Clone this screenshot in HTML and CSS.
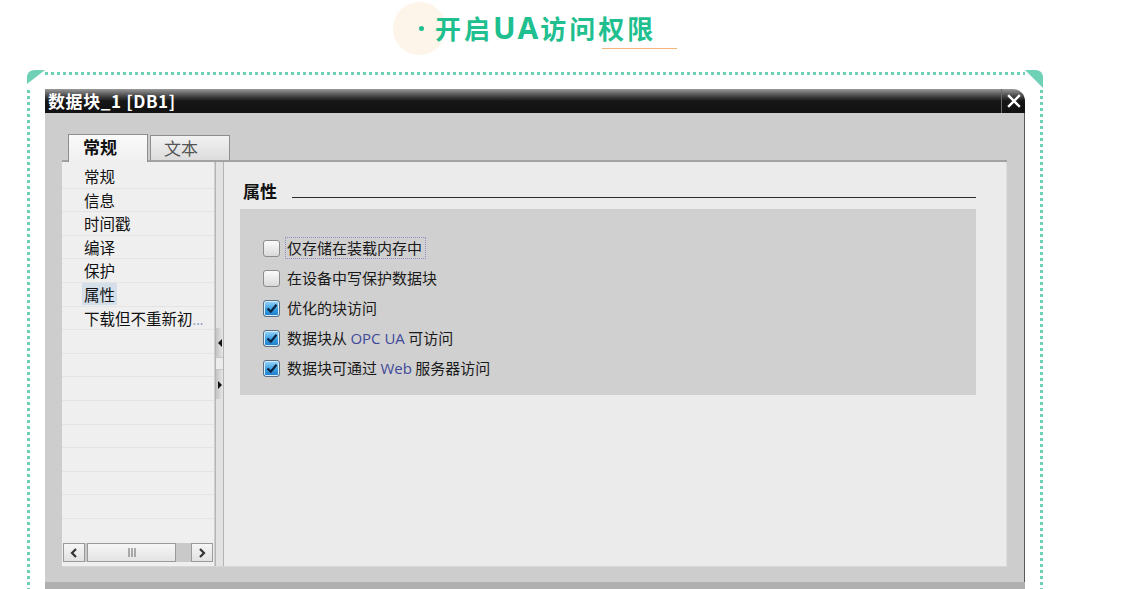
FILE: index.html
```html
<!DOCTYPE html>
<html lang="zh">
<head>
<meta charset="utf-8">
<link rel="stylesheet" href="styles.css">
</head>
<body>
<header class="head">
  <div class="heading">
    <span class="dot"></span>
    <h1 class="title">开启<span class="lat">UA</span>访问权限</h1>
  </div>
</header>
<section class="frame">
  <svg class="corner corner-l" width="18" height="16" viewBox="0 0 18 16"><path d="M0 14 L0 8 Q0 0 8 0 L18 0 Z" fill="#6ed0b4"/></svg>
  <svg class="corner corner-r" width="18" height="18" viewBox="0 0 18 18"><path d="M0 0 L10 0 Q18 0 18 8 L18 18 Z" fill="#6ed0b4"/></svg>
  <div class="dialog">
    <div class="titlebar">
      <span class="dlg-title">数据块_1 [DB1]</span>
      <span class="close"><svg width="14" height="14" viewBox="0 0 14 14"><path d="M2 2 L12 12 M12 2 L2 12" stroke="#fff" stroke-width="2.4" stroke-linecap="square"/></svg></span>
    </div>
    <div class="dlg-body">
      <div class="tabs">
        <div class="tab active">常规</div>
        <div class="tab">文本</div>
      </div>
      <div class="tabline"></div>
      <div class="panel">
        <nav class="nav">
          <ul class="nav-list">
            <li class="nav-item"><span>常规</span></li>
            <li class="nav-item"><span>信息</span></li>
            <li class="nav-item"><span>时间戳</span></li>
            <li class="nav-item"><span>编译</span></li>
            <li class="nav-item"><span>保护</span></li>
            <li class="nav-item"><span class="sel">属性</span></li>
            <li class="nav-item"><span>下载但不重新初<span class="ell">...</span></span></li>
            <li class="nav-item"></li>
            <li class="nav-item"></li>
            <li class="nav-item"></li>
            <li class="nav-item"></li>
            <li class="nav-item"></li>
            <li class="nav-item"></li>
            <li class="nav-item"></li>
            <li class="nav-item"></li>
          </ul>
          <div class="hscroll">
            <span class="sbtn"><svg width="10" height="12" viewBox="0 0 10 12"><path d="M7 2 L3 6 L7 10" fill="none" stroke="#333" stroke-width="2.2"/></svg></span>
            <span class="thumb"><svg width="10" height="9" viewBox="0 0 10 9"><path d="M2 0 V9 M5 0 V9 M8 0 V9" stroke="#666" stroke-width="1"/></svg></span>
            <span class="track"></span>
            <span class="sbtn"><svg width="10" height="12" viewBox="0 0 10 12"><path d="M3 2 L7 6 L3 10" fill="none" stroke="#333" stroke-width="2.2"/></svg></span>
          </div>
        </nav>
        <div class="splitter">
          <div class="sp-gap1"></div>
          <div class="sp-btn"><svg width="6" height="8" viewBox="0 0 6 8"><path d="M5 0 L1 4 L5 8 Z" fill="#111"/></svg></div>
          <div class="sp-gap2"></div>
          <div class="sp-btn"><svg width="6" height="8" viewBox="0 0 6 8"><path d="M1 0 L5 4 L1 8 Z" fill="#111"/></svg></div>
        </div>
        <div class="content">
          <div class="sec-head">
            <span class="sec-title">属性</span>
            <span class="sec-line"></span>
          </div>
          <div class="props">
            <label class="prop">
              <span class="cb"></span>
              <span class="lbl focus">仅存储在装载内存中</span>
            </label>
            <label class="prop">
              <span class="cb"></span>
              <span class="lbl">在设备中写保护数据块</span>
            </label>
            <label class="prop">
              <span class="cb checked"><svg width="12" height="11" viewBox="0 0 12 11"><path d="M1.5 5.5 L4.8 8.6 L10.5 1.8" fill="none" stroke="#0c2340" stroke-width="2.2"/></svg></span>
              <span class="lbl">优化的块访问</span>
            </label>
            <label class="prop">
              <span class="cb checked"><svg width="12" height="11" viewBox="0 0 12 11"><path d="M1.5 5.5 L4.8 8.6 L10.5 1.8" fill="none" stroke="#0c2340" stroke-width="2.2"/></svg></span>
              <span class="lbl">数据块从 <span class="en">OPC UA</span> 可访问</span>
            </label>
            <label class="prop">
              <span class="cb checked"><svg width="12" height="11" viewBox="0 0 12 11"><path d="M1.5 5.5 L4.8 8.6 L10.5 1.8" fill="none" stroke="#0c2340" stroke-width="2.2"/></svg></span>
              <span class="lbl">数据块可通过 <span class="en">Web</span> 服务器访问</span>
            </label>
          </div>
        </div>
      </div>
    </div>
    <div class="dlg-foot"></div>
  </div>
</section>
</body>
</html>
```

FILE: styles.css
```css
* { box-sizing: border-box; }
html, body { margin: 0; padding: 0; }
body {
  background: #fff;
  width: 1135px;
  height: 589px;
  overflow: hidden;
  font-family: "Noto Sans CJK SC", "Noto Sans", sans-serif;
  color: #1a1a1a;
}

/* heading */
.head {
  height: 70px;
  padding-left: 393px;
}
.heading {
  position: relative;
  display: flex;
  align-items: center;
  height: 56px;
}
.heading::before {
  content: "";
  position: absolute;
  left: 0;
  top: 2px;
  width: 53px;
  height: 53px;
  border-radius: 50%;
  background: #fdf4ea;
}
.heading::after {
  content: "";
  position: absolute;
  left: 209px;
  top: 48px;
  width: 75px;
  height: 1px;
  background: #f4b57c;
}
.dot {
  position: relative;
  width: 5px;
  height: 5px;
  border-radius: 50%;
  background: #1fbf8f;
  margin-left: 26px;
  margin-right: 11px;
}
.title {
  position: relative;
  margin: 0;
  font-size: 26px;
  font-weight: 700;
  letter-spacing: 3px;
  color: #1fbf8f;
  line-height: 1;
}
.title .lat {
  font-family: "Noto Sans", sans-serif;
  font-size: 30px;
  letter-spacing: 2px;
}

/* frame */
.frame {
  position: relative;
  margin-left: 27px;
  width: 1016px;
  height: 519px;
  padding: 19px 18px 0 18px;
}
.frame::before {
  content: "";
  position: absolute;
  left: 18px;
  right: 18px;
  top: 2px;
  height: 3px;
  background: repeating-linear-gradient(90deg, #6ed0b4 0 3px, transparent 3px 6px);
}
.frame::after {
  content: "";
  position: absolute;
  left: 0;
  right: 0;
  top: 20px;
  bottom: 0;
  border-left: 3px solid transparent;
  border-right: 3px solid transparent;
  background:
    repeating-linear-gradient(180deg, #6ed0b4 0 3px, transparent 3px 6px) left top / 3px 100% no-repeat,
    repeating-linear-gradient(180deg, #6ed0b4 0 3px, transparent 3px 6px) right top / 3px 100% no-repeat;
  background-origin: border-box;
  pointer-events: none;
}
.corner { position: absolute; top: 0; }
.corner-l { left: 0; }
.corner-r { right: 0; }

/* dialog */
.dialog {
  width: 980px;
  height: 500px;
  display: flex;
  flex-direction: column;
}
.titlebar {
  height: 24px;
  display: flex;
  align-items: center;
  justify-content: space-between;
  background: linear-gradient(180deg, #9a9a9a 0, #4a4a4a 28%, #161616 50%, #111 100%);
  border-top-right-radius: 12px;
}
.dlg-title {
  color: #fff;
  font-size: 17px;
  font-weight: 700;
  letter-spacing: 0.6px;
  padding-left: 3px;
  line-height: 24px;
}
.close {
  width: 24px;
  height: 24px;
  border-left: 1px solid #6a6a6a;
  display: flex;
  align-items: center;
  justify-content: center;
}
.dlg-body {
  background: #cdcdcd;
  border-right: 1px solid #5a5a5a;
  padding: 21px 17px 15px 17px;
}
.tabs {
  display: flex;
  align-items: flex-end;
  height: 26px;
  padding-left: 6px;
  gap: 2px;
}
.tab {
  width: 80px;
  height: 25px;
  border: 1px solid #8e8e8e;
  border-bottom: none;
  background: linear-gradient(180deg, #f2f2f2, #dcdcdc);
  color: #555;
  font-size: 17px;
  line-height: 23px;
  padding-left: 13px;
}
.tab.active {
  height: 28px;
  margin-bottom: -2px;
  position: relative;
  z-index: 1;
  background: linear-gradient(180deg, #fafafa, #efefef);
  color: #111;
  font-weight: 700;
  padding-left: 14px;
  width: 80px;
}
.tabline {
  height: 2px;
  background: #a2a2a2;
}
.panel {
  height: 405px;
  display: flex;
  background: #ebebeb;
  border-right: 1px solid #dedede;
  border-bottom: 1px solid #d6d6d6;
}

/* nav */
.nav {
  width: 153px;
  background: #efefef;
  display: flex;
  flex-direction: column;
  padding-top: 3px;
  border-right: 1px solid #cfcfcf;
}
.nav-list {
  list-style: none;
  margin: 0;
  padding: 0;
  flex: 1;
  overflow: hidden;
}
.nav-item {
  height: 23.6px;
  border-bottom: 1px solid #e4e4e4;
  font-size: 15.5px;
  line-height: 22px;
  padding-left: 22px;
  color: #111;
  white-space: nowrap;
}
.nav-item .sel {
  background: #d4dfe9;
  padding: 0 2px;
  margin-left: -2px;
}
.ell { color: #7d8cb0; font-size: 13px; }
.hscroll {
  height: 19px;
  margin: 0 1px 4px 1px;
  display: flex;
  background: #c9c9c9;
}
.sbtn {
  width: 22px;
  border: 1px solid #9a9a9a;
  background: linear-gradient(180deg, #f6f6f6, #e2e2e2);
  display: flex;
  align-items: center;
  justify-content: center;
}
.thumb {
  width: 89px;
  margin-left: 2px;
  border: 1px solid #9a9a9a;
  background: linear-gradient(180deg, #f6f6f6, #e4e4e4);
  display: flex;
  align-items: center;
  justify-content: center;
}
.track { flex: 1; }

/* splitter */
.splitter {
  width: 9px;
  background: #e2e2e2;
  border-left: 1px solid #b4b4b4;
  border-right: 1px solid #b4b4b4;
  display: flex;
  flex-direction: column;
}
.sp-gap1 { height: 166px; }
.sp-gap2 { height: 13px; border-top: 1px solid #c6c6c6; border-bottom: 1px solid #c6c6c6; background: #ececec; }
.sp-btn {
  height: 29px;
  background: linear-gradient(90deg, #c4c4c4, #e6e6e6);
  display: flex;
  align-items: center;
  justify-content: center;
}

/* content */
.content {
  flex: 1;
  padding: 16px 30px 0 16px;
}
.sec-head {
  display: flex;
  align-items: flex-end;
  height: 24px;
  padding-left: 3px;
}
.sec-title {
  font-size: 17px;
  font-weight: 700;
  line-height: 22px;
  color: #111;
}
.sec-line {
  flex: 1;
  height: 1px;
  background: #2a2a2a;
  margin-left: 15px;
  margin-bottom: 4px;
}
.props {
  margin-top: 7px;
  height: 186px;
  background: #d0d0d0;
  padding: 27px 0 0 23px;
  display: flex;
  flex-direction: column;
  gap: 6px;
}
.prop {
  display: flex;
  align-items: center;
  height: 24px;
  font-size: 15px;
  color: #1a1a1a;
}
.cb {
  width: 17px;
  height: 17px;
  border: 1px solid #8c8c8c;
  border-radius: 3px;
  background: linear-gradient(180deg, #fbfbfb, #d9d9d9);
  display: flex;
  align-items: center;
  justify-content: center;
  flex: none;
}
.cb.checked {
  border-color: #5a6f86;
  background: linear-gradient(180deg, #9ad6fa 0, #3a9de0 55%, #1a7ccc 100%);
  box-shadow: inset 0 0 0 1px #d8eefc;
}
.lbl {
  margin-left: 5px;
  line-height: 20px;
  padding: 0 3px 0 1px;
  border: 1px dotted transparent;
}
.lbl.focus { border-color: #8f94c2; }
.en { font-family: "Open Sans", "Noto Sans", sans-serif; color: #3f4a9a; }

.dlg-foot {
  height: 8px;
  background: #b0b0b0;
}
```
